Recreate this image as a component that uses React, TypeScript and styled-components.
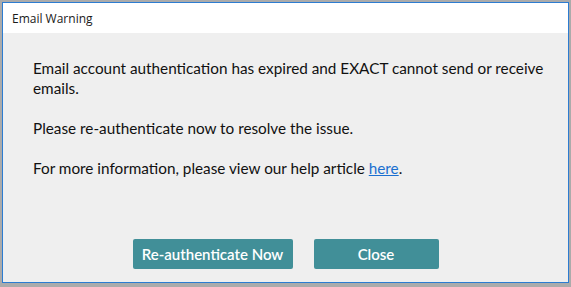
import React from 'react';
import styled, { createGlobalStyle } from 'styled-components';

const Global = createGlobalStyle`
  html, body { margin: 0; padding: 0; background: #ababab; }
  body { padding: 2px 2px 4px 2px; }
`;

const Window = styled.div`
  box-sizing: border-box;
  width: 567px;
  height: 281px;
  border: 1px solid #2c7cd1;
  background: #efefef;
  display: flex;
  flex-direction: column;
`;

const TitleBar = styled.div`
  height: 30px;
  background: #ffffff;
  display: flex;
  align-items: center;
  padding-left: 9px;
  font-family: "Open Sans", "Noto Sans", sans-serif;
  font-size: 12px;
  color: #1a1a1a;
`;

const Body = styled.div`
  flex: 1;
  display: flex;
  flex-direction: column;
  padding: 25px 12px 13px 30px;
  font-family: Lato, "Noto Sans", sans-serif;
  font-size: 15.3px;
  line-height: 20px;
  color: #111111;
`;

const Para = styled.p`
  margin: 0 0 20px 0;
`;

const Link = styled.a`
  color: #1a6fd0;
  text-decoration: underline;
`;

const Actions = styled.div`
  margin: auto -12px 0 -30px;
  display: flex;
  justify-content: center;
  gap: 21px;
`;

const Button = styled.button<{ $w: number }>`
  width: ${({ $w }) => $w}px;
  height: 30px;
  border: none;
  border-radius: 2px;
  background: #418f98;
  color: #ffffff;
  font-family: Lato, "Noto Sans", sans-serif;
  font-size: 15px;
  font-weight: 600;
  padding: 0;
  cursor: pointer;
`;

export default function App() {
  return (
    <>
      <Global />
      <Window>
        <TitleBar>Email Warning</TitleBar>
        <Body>
          <Para>
            Email account authentication has expired and EXACT cannot send or receive
            emails.
          </Para>
          <Para>Please re-authenticate now to resolve the issue.</Para>
          <Para>
            For more information, please view our help article <Link href="#">here</Link>.
          </Para>
          <Actions>
            <Button $w={160}>Re-authenticate Now</Button>
            <Button $w={125}>Close</Button>
          </Actions>
        </Body>
      </Window>
    </>
  );
}
